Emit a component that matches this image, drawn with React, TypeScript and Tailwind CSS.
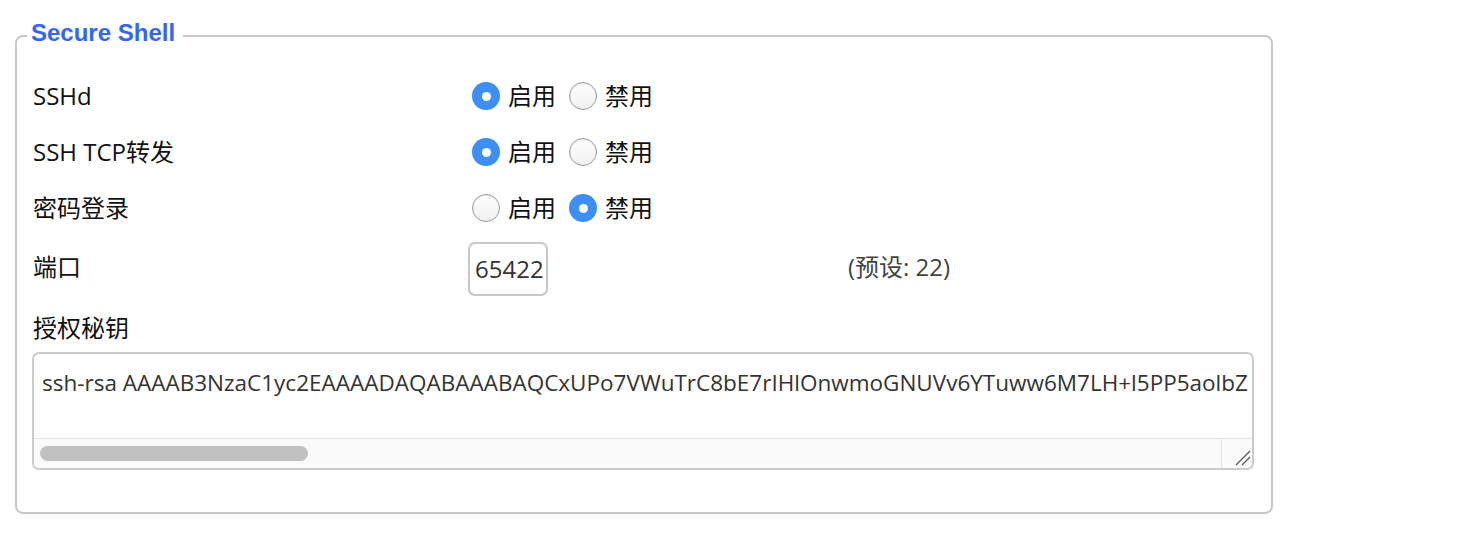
import React from "react";

const FONT = { fontFamily: '"Open Sans", "Noto Sans CJK SC", sans-serif' };

function Radio({ checked, label }: { checked: boolean; label: string }) {
  return (
    <label className="flex items-center">
      {checked ? (
        <span className="w-[28px] h-[28px] rounded-full bg-[#3d8ff5] flex items-center justify-center">
          <span className="w-[9px] h-[9px] rounded-full bg-white" />
        </span>
      ) : (
        <span className="w-[28px] h-[28px] rounded-full border border-[#9a9a9a] bg-gradient-to-b from-white to-[#f0f0f0] shadow-[inset_0_1px_1px_rgba(0,0,0,0.08)]" />
      )}
      <span className="ml-[8px] text-[24px] leading-[32px] text-[#111]">{label}</span>
    </label>
  );
}

function RadioRow({ label, on }: { label: string; on: boolean }) {
  return (
    <div className="flex items-center h-[56px]">
      <div className="w-[436px] text-[24px] leading-[32px] text-[#111] pl-[1px] -mt-[1px]">{label}</div>
      <div className="flex items-center pl-[4px] gap-[13px]">
        <Radio checked={on} label="启用" />
        <Radio checked={!on} label="禁用" />
      </div>
    </div>
  );
}

export default function App() {
  const key =
    "ssh-rsa AAAAB3NzaC1yc2EAAAADAQABAAABAQCxUPo7VWuTrC8bE7rIHlOnwmoGNUVv6YTuww6M7LH+l5PP5aolbZ";
  return (
    <div className="w-[1482px] h-[542px] bg-white overflow-hidden" style={FONT}>
      <fieldset className="ml-[15px] mt-[19px] w-[1258px] min-w-0 border-2 border-[#c8c8c8] rounded-[8px] pl-[15px] pr-[17px] pb-[42px]">
        <legend
          className="-ml-[5px] pl-[4px] pr-[8px] pb-[6px] text-[24px] leading-[28px] font-bold text-[#3366f6]"
          style={{ fontFamily: '"Liberation Sans", Arial, sans-serif' }}
        >
          Secure Shell
        </legend>
        <div className="pt-[15px]">
          <RadioRow label="SSHd" on={true} />
          <RadioRow label="SSH TCP转发" on={true} />
          <RadioRow label="密码登录" on={false} />
          <div className="flex items-center h-[66px]">
            <div className="w-[436px] text-[24px] leading-[32px] text-[#111] pl-[1px] -mt-[4px]">端口</div>
            <div className="w-[80px] h-[54px] border-2 border-[#c8c8c8] rounded-[7px] flex items-center pl-[5px] text-[24px] text-[#333]">
              65422
            </div>
            <div className="ml-[300px] -mt-[4px] text-[24px] leading-[32px] text-[#444]">(预设: 22)</div>
          </div>
          <div className="mt-[8px] h-[36px] flex items-center text-[24px] leading-[32px] text-[#111] pl-[1px]">授权秘钥</div>
          <div className="mt-[6px] h-[118px] border-2 border-[#cbcbcb] rounded-[7px] flex flex-col overflow-hidden">
            <div className="flex-1 overflow-hidden whitespace-nowrap pl-[8px] pt-[12px] text-[22.5px] leading-[33px] text-[#333]">
              {key}
            </div>
            <div className="h-[30px] flex border-t border-[#e3e3e3] bg-[#fafafa]">
              <div className="flex-1 flex items-center pl-[6px]">
                <div className="w-[268px] h-[15px] rounded-full bg-[#c1c1c1]" />
              </div>
              <div className="w-[31px] border-l border-[#e3e3e3]">
                <svg width="31" height="30" viewBox="0 0 31 30" className="block">
                  <line x1="14" y1="26" x2="28" y2="12" stroke="#555" strokeWidth="1.3" />
                  <line x1="20" y1="26" x2="28" y2="18" stroke="#555" strokeWidth="1.3" />
                </svg>
              </div>
            </div>
          </div>
        </div>
      </fieldset>
    </div>
  );
}
